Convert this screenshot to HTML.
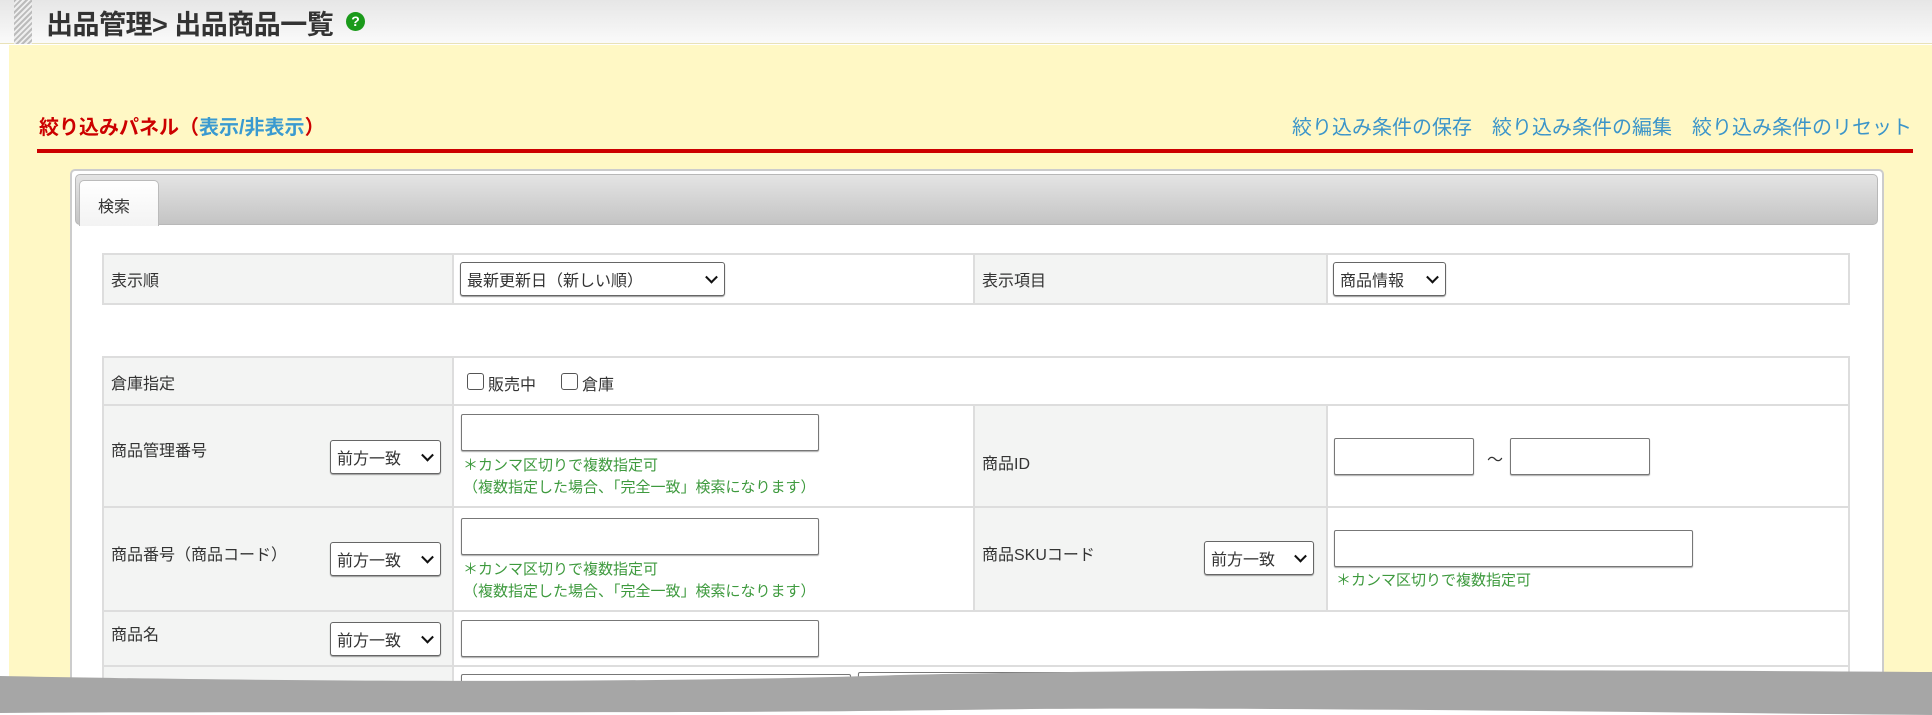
<!DOCTYPE html>
<html><head><meta charset="utf-8"><style>
*{box-sizing:border-box;margin:0;padding:0}
html{width:1932px;height:715px;overflow:hidden}
body{width:1932px;height:715px;overflow:hidden;position:relative;background:#fff;font-family:"Liberation Sans","Noto Sans CJK JP",sans-serif;color:#333}
.a{position:absolute}
.hdr{left:0;top:0;width:1932px;height:44px;background:linear-gradient(#e6e6e6,#fafafa);border-bottom:1px solid #e9e2b8}
.stripe{left:14px;top:0;width:18px;height:44px;background:repeating-linear-gradient(135deg,#bbb 0 2px,#eee 2px 4px)}
.title{left:46px;top:3px;font-size:27px;font-weight:bold;color:#333;letter-spacing:-0.5px;white-space:nowrap}
.q{left:346px;top:12px;width:19px;height:19px;border-radius:50%;background:#1a9a1a;color:#fff;font-size:14px;font-weight:bold;text-align:center;line-height:19px}
.yel{left:9px;top:45px;width:1923px;height:670px;background:#fff8c5}
.red{left:39px;top:111px;font-size:20px;color:#c00;font-weight:bold;white-space:nowrap}
.red span{color:#3a9ad0}
.links{left:1292px;top:111px;font-size:20px;color:#3c95c9;white-space:nowrap}
.rline{left:37px;top:149px;width:1876px;height:4px;background:#c00}
.panel{left:70px;top:169px;width:1814px;height:546px;background:#fff;border:2px solid #ccc;border-bottom:none;border-radius:5px 5px 0 0}
.tabbar{left:75px;top:174px;width:1803px;height:51px;background:linear-gradient(#e4e4e4,#c4c4c4);border:1px solid #b8b8b8;border-radius:5px}
.tab{left:79px;top:180px;width:80px;height:46px;background:linear-gradient(#fff,#f3f3f3);border:1px solid #bbb;border-bottom:none;border-radius:5px 5px 0 0;font-size:16px;padding:12px 0 0 18px}
table{position:absolute;border-collapse:collapse;font-size:16px}
td{border:2px solid #ddd;vertical-align:top;padding:0}
td.l{background:#f3f4f3}
.sel{position:absolute;border:1px solid #666;border-radius:3px;background:#fff;font-size:16px;padding:4px 6px;box-shadow:0 1px 1px #999}
.sel:after{content:"";position:absolute;right:8px;top:50%;width:7px;height:7px;border-right:2.5px solid #111;border-bottom:2.5px solid #111;transform:translateY(-70%) rotate(45deg)}
.inp{position:absolute;border:1px solid #777;border-radius:2px;background:#fff;box-shadow:0 1px 1px #aaa}
.note{position:absolute;font-size:15px;color:#3e9a3e;white-space:nowrap}
.lab{position:absolute;font-size:16px;color:#333;white-space:nowrap}
.cb{position:absolute;width:17px;height:17px;border:1.5px solid #555;border-radius:3px;background:#fff}
</style></head><body>
<div class="a hdr"></div><div class="a stripe"></div>
<div class="a title">出品管理&gt; 出品商品一覧</div><div class="a q">?</div>
<div class="a yel"></div>
<div class="a red">絞り込みパネル（<span>表示/非表示</span>）</div>
<div class="a links">絞り込み条件の保存　絞り込み条件の編集　絞り込み条件のリセット</div>
<div class="a rline"></div>
<div class="a panel"></div>
<div class="a tabbar"></div>
<div class="a tab">検索</div>

<table style="left:102px;top:253px;width:1748px;height:52px">
<tr><td class="l" style="width:350px"></td><td style="width:521px"></td><td class="l" style="width:353px"></td><td></td></tr></table>
<div class="lab" style="left:111px;top:267px">表示順</div>
<div class="sel" style="left:460px;top:262px;width:265px;height:34px">最新更新日（新しい順）</div>
<div class="lab" style="left:982px;top:267px">表示項目</div>
<div class="sel" style="left:1333px;top:262px;width:113px;height:34px">商品情報</div>

<table style="left:102px;top:356px;width:1748px;height:355px">
<tr style="height:48px"><td class="l" style="width:350px"></td><td colspan="3"></td></tr>
<tr style="height:102px"><td class="l"></td><td style="width:521px"></td><td class="l" style="width:353px"></td><td></td></tr>
<tr style="height:104px"><td class="l"></td><td></td><td class="l"></td><td></td></tr>
<tr style="height:55px"><td class="l"></td><td colspan="3"></td></tr>
<tr><td class="l"></td><td colspan="3"></td></tr>
</table>

<div class="lab" style="left:111px;top:370px">倉庫指定</div>
<div class="cb" style="left:467px;top:373px"></div><div class="lab" style="left:488px;top:371px">販売中</div>
<div class="cb" style="left:561px;top:373px"></div><div class="lab" style="left:582px;top:371px">倉庫</div>

<div class="lab" style="left:111px;top:437px">商品管理番号</div>
<div class="sel" style="left:330px;top:440px;width:111px;height:34px">前方一致</div>
<div class="inp" style="left:461px;top:414px;width:358px;height:37px"></div>
<div class="note" style="left:463px;top:454px">＊カンマ区切りで複数指定可</div>
<div class="note" style="left:463px;top:476px">（複数指定した場合、「完全一致」検索になります）</div>
<div class="lab" style="left:982px;top:450px">商品ID</div>
<div class="inp" style="left:1334px;top:438px;width:140px;height:37px"></div>
<div class="lab" style="left:1487px;top:446px">～</div>
<div class="inp" style="left:1510px;top:438px;width:140px;height:37px"></div>

<div class="lab" style="left:111px;top:541px">商品番号（商品コード）</div>
<div class="sel" style="left:330px;top:542px;width:111px;height:34px">前方一致</div>
<div class="inp" style="left:461px;top:518px;width:358px;height:37px"></div>
<div class="note" style="left:463px;top:558px">＊カンマ区切りで複数指定可</div>
<div class="note" style="left:463px;top:580px">（複数指定した場合、「完全一致」検索になります）</div>
<div class="lab" style="left:982px;top:541px">商品SKUコード</div>
<div class="sel" style="left:1204px;top:541px;width:110px;height:34px">前方一致</div>
<div class="inp" style="left:1334px;top:530px;width:359px;height:37px"></div>
<div class="note" style="left:1336px;top:569px">＊カンマ区切りで複数指定可</div>

<div class="lab" style="left:111px;top:621px">商品名</div>
<div class="sel" style="left:330px;top:622px;width:111px;height:34px">前方一致</div>
<div class="inp" style="left:461px;top:620px;width:358px;height:37px"></div>
<div class="inp" style="left:461px;top:674px;width:390px;height:30px"></div>
<div class="inp" style="left:858px;top:672px;width:400px;height:30px"></div>

<svg class="a" style="left:0;top:660px" width="1932" height="55" viewBox="0 0 1932 55">
<path d="M0 16 C200 20 600 25 900 15 C1200 8 1600 10 1932 12 L1932 55 L0 55 Z" fill="#a6a6a6"/>
<path d="M0 53 C300 51 700 54 950 50 C1200 46 1600 52 1932 55 L0 55 Z" fill="#fff"/>
</svg>
</body></html>
